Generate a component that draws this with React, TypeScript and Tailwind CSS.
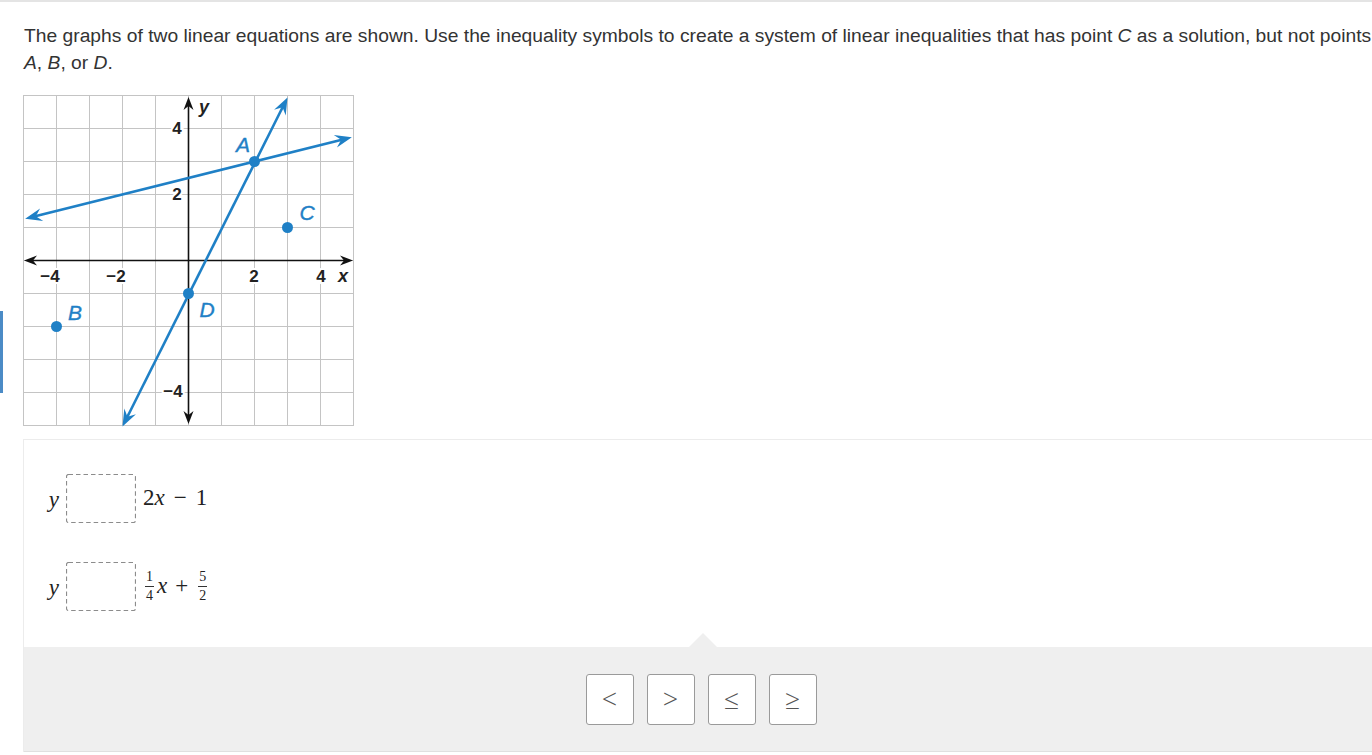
import React from "react";

const BLUE = "#1f80c6";

function arrowHead(tx: number, ty: number, dx: number, dy: number, len: number, half: number, notch: number) {
  const l = Math.hypot(dx, dy);
  const ux = dx / l, uy = dy / l;
  const px = -uy, py = ux;
  const bx = tx - ux * len, by = ty - uy * len;
  const nx = tx - ux * (len - notch), ny = ty - uy * (len - notch);
  return `${tx},${ty} ${bx + px * half},${by + py * half} ${nx},${ny} ${bx - px * half},${by - py * half}`;
}

function Graph() {
  const o = 165.5;
  const s = 33;
  const X = (x: number) => o + s * x;
  const Y = (y: number) => o - s * y;
  const grid = [];
  for (let i = 0; i <= 10; i++) {
    const p = 0.5 + 33 * i;
    grid.push(<line key={"v" + i} x1={p} y1={0} x2={p} y2={331} stroke="#c4c4c4" strokeWidth={1} />);
    grid.push(<line key={"h" + i} x1={0} y1={p} x2={331} y2={p} stroke="#c4c4c4" strokeWidth={1} />);
  }
  const l1a = { x: X(-2), y: Y(-5) + 1 };
  const l1b = { x: X(3), y: Y(5) + 2 };
  const l2a = { x: X(-4.95), y: Y(-4.95 / 4 + 2.5) };
  const l2b = { x: X(4.95), y: Y(4.95 / 4 + 2.5) };
  const numStyle = { fontFamily: "'Liberation Sans', Arial, sans-serif", fontSize: 17, fontWeight: 700 as const, fill: "#222" };
  const lblStyle = { fontFamily: "'Liberation Sans', Arial, sans-serif", fontSize: 21, fontStyle: "italic" as const, fill: BLUE, stroke: BLUE, strokeWidth: 0.4 };
  const num = (t: string, x: number, y: number) => (
    <text x={x} y={y} textAnchor="middle" dominantBaseline="central" style={numStyle} stroke="#fff" strokeWidth={4} paintOrder="stroke">{t}</text>
  );
  return (
    <svg width={332} height={332} viewBox="0 0 332 332" className="block">
      <rect x={0} y={0} width={332} height={332} fill="#fff" />
      {grid}
      <line x1={6} y1={Y(0)} x2={326} y2={Y(0)} stroke="#111" strokeWidth={1.6} />
      <polygon points={arrowHead(1, Y(0), -1, 0, 13, 5, 4)} fill="#111" />
      <polygon points={arrowHead(330, Y(0), 1, 0, 13, 5, 4)} fill="#111" />
      <line x1={X(0)} y1={8} x2={X(0)} y2={322} stroke="#111" strokeWidth={1.6} />
      <polygon points={arrowHead(X(0), 2, 0, -1, 13, 5, 4)} fill="#111" />
      <polygon points={arrowHead(X(0), 329, 0, 1, 13, 5, 4)} fill="#111" />
      {num("4", 154, 33)}
      {num("2", 154, 99.5)}
      {num("\u22124", 150, 296)}
      {num("\u22124", 27, 181)}
      {num("\u22122", 93, 181)}
      {num("2", 231, 181)}
      {num("4", 298, 181)}
      <text x={181} y={12} textAnchor="middle" dominantBaseline="central" style={{ ...numStyle, fontStyle: "italic", fontSize: 18 }}>y</text>
      <text x={320} y={181} textAnchor="middle" dominantBaseline="central" style={{ ...numStyle, fontStyle: "italic", fontSize: 18 }}>x</text>
      <line x1={l1a.x + 4} y1={l1a.y - 8} x2={l1b.x - 4} y2={l1b.y + 8} stroke={BLUE} strokeWidth={2.6} />
      <polygon points={arrowHead(l1a.x, l1a.y, l1a.x - l1b.x, l1a.y - l1b.y, 17, 6.5, 6)} fill={BLUE} />
      <polygon points={arrowHead(l1b.x, l1b.y, l1b.x - l1a.x, l1b.y - l1a.y, 17, 6.5, 6)} fill={BLUE} />
      <line x1={l2a.x + 8} y1={l2a.y - 2} x2={l2b.x - 8} y2={l2b.y + 2} stroke={BLUE} strokeWidth={2.6} />
      <polygon points={arrowHead(l2a.x, l2a.y, l2a.x - l2b.x, l2a.y - l2b.y, 17, 6.5, 6)} fill={BLUE} />
      <polygon points={arrowHead(l2b.x, l2b.y, l2b.x - l2a.x, l2b.y - l2a.y, 17, 6.5, 6)} fill={BLUE} />
      <circle cx={X(2)} cy={Y(3)} r={5.5} fill={BLUE} />
      <circle cx={X(3)} cy={Y(1)} r={5.5} fill={BLUE} />
      <circle cx={X(0)} cy={Y(-1)} r={5.5} fill={BLUE} />
      <circle cx={X(-4)} cy={Y(-2)} r={5.5} fill={BLUE} />
      <text x={220} y={49} textAnchor="middle" dominantBaseline="central" style={lblStyle}>A</text>
      <text x={52} y={217} textAnchor="middle" dominantBaseline="central" style={lblStyle}>B</text>
      <text x={284} y={117} textAnchor="middle" dominantBaseline="central" style={lblStyle}>C</text>
      <text x={184} y={214} textAnchor="middle" dominantBaseline="central" style={lblStyle}>D</text>
    </svg>
  );
}

function Frac({ n, d }: { n: string; d: string }) {
  return (
    <span className="inline-flex flex-col items-center leading-none text-[14px] mx-[2px]" style={{ fontFamily: "'Liberation Serif', serif" }}>
      <span className="px-[1px] pb-[2px] border-b border-[#333]">{n}</span>
      <span className="px-[1px] pt-[2px]">{d}</span>
    </span>
  );
}

function DashBox() {
  return (
    <svg width={70} height={49} className="block">
      <rect x={0.5} y={0.5} width={69} height={48} rx={2} fill="#fff" stroke="#8c8c8c" strokeWidth={1.2} strokeDasharray="4.5 3" />
    </svg>
  );
}

function Row({ children }: { children: React.ReactNode }) {
  return (
    <div className="flex items-center h-[49px] text-[#222]" style={{ fontFamily: "'Liberation Serif', serif" }}>
      <span className="italic text-[23px] w-[42px] text-right pr-[7px] pt-[4px]">y</span>
      <DashBox />
      <div className="pl-[7px] text-[23px] flex items-center">{children}</div>
    </div>
  );
}

function Btn({ s }: { s: string }) {
  return (
    <button className="w-[48px] h-[51px] bg-white border border-[#9a9a9a] rounded-[3px] flex items-center justify-center text-[#555] text-[27px] font-light" style={{ fontFamily: "'Open Sans', 'DejaVu Sans', sans-serif" }}>
      {s}
    </button>
  );
}

export default function App() {
  return (
    <div className="relative w-[1372px] h-[755px] overflow-hidden bg-white text-[#333]" style={{ fontFamily: "'Liberation Sans', Arial, sans-serif" }}>
      <div className="h-[2px] bg-[#e4e4e4]" />
      <div className="absolute left-0 top-[311px] w-[3px] h-[82px] bg-[#4b8bc6]" />
      <p className="pl-[24px] pt-[20px] text-[19.25px] leading-[27px] whitespace-nowrap">
        The graphs of two linear equations are shown. Use the inequality symbols to create a system of linear inequalities that has point <i>C</i> as a solution, but not points
        <br />
        <i>A</i>, <i>B</i>, or <i>D</i>.
      </p>
      <div className="ml-[23px] mt-[19px]">
        <Graph />
      </div>
      <div className="ml-[23px] mt-[12px] border-t border-l border-[#ececec] flex flex-col">
        <div className="pt-[34px] pb-[36px] flex flex-col gap-[39px]">
          <Row>
            <span>2<span className="italic">x</span><span className="mx-[9px]">−</span>1</span>
          </Row>
          <Row>
            <span className="flex items-center">
              <Frac n="1" d="4" />
              <span className="italic ml-[1px]">x</span>
              <span className="mx-[8px]">+</span>
              <Frac n="5" d="2" />
            </span>
          </Row>
        </div>
        <div className="relative bg-[#efefef] h-[105px] flex items-center justify-center gap-[13px] pl-[6px] border-b border-[#e0e0e0]">
          <div className="absolute left-[665px] -top-[14px] w-0 h-0 border-l-[14px] border-r-[14px] border-b-[14px] border-l-transparent border-r-transparent border-b-[#efefef]" />
          <Btn s="<" />
          <Btn s=">" />
          <Btn s="≤" />
          <Btn s="≥" />
        </div>
      </div>
    </div>
  );
}
